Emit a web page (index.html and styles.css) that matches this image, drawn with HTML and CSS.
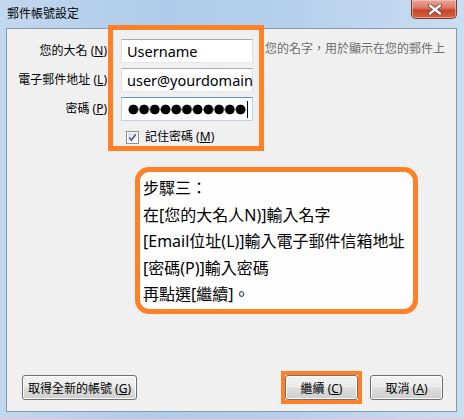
FILE: index.html
```html
<!DOCTYPE html>
<html lang="zh-Hant">
<head>
    <meta charset="UTF-8">
    <title>郵件帳號設定</title>
    <link rel="stylesheet" href="styles.css">
</head>
<body>
    <div class="window">
        <!-- 標題列 -->
        <div class="titlebar">
            <span class="title">郵件帳號設定</span>
            <div class="close">
                <svg width="14" height="11" viewBox="0 0 14 11">
                    <path d="M2 1.5 L12 9.5 M12 1.5 L2 9.5" stroke="#5a3a34" stroke-width="4" stroke-linecap="round"/>
                    <path d="M2 1.5 L12 9.5 M12 1.5 L2 9.5" stroke="#fff" stroke-width="2.4" stroke-linecap="round"/>
                </svg>
            </div>
        </div>

        <div class="panel">
            <!-- 帳號欄位 -->
            <div class="form">
                <div class="labels">
                    <div class="label">您的大名 (<u>N</u>)</div>
                    <div class="label">電子郵件地址 (<u>L</u>)</div>
                    <div class="label">密碼 (<u>P</u>)</div>
                </div>
                <div class="mark fields">
                    <div class="field">Username</div>
                    <div class="field">user@yourdomain</div>
                    <div class="field focused"><span class="dots"></span><span class="caret"></span></div>
                    <div class="remember">
                        <svg class="check" width="13" height="13" viewBox="0 0 13 13">
                            <defs>
                                <linearGradient id="cb" x1="0" y1="0" x2="1" y2="1">
                                    <stop offset="0" stop-color="#dcdcdc"/>
                                    <stop offset="1" stop-color="#fbfbfb"/>
                                </linearGradient>
                            </defs>
                            <rect x="0.5" y="0.5" width="12" height="12" fill="#fff" stroke="#8f8f8f"/>
                            <rect x="2" y="2" width="9" height="9" fill="url(#cb)"/>
                            <path d="M3.3 6.5 L5.4 9.2 L9.8 3.2" fill="none" stroke="#4a5e96" stroke-width="1.6"/>
                        </svg>
                        <span>記住密碼 (<u>M</u>)</span>
                    </div>
                </div>
                <div class="hint">您的名字，用於顯示在您的郵件上</div>
            </div>

            <!-- 說明 -->
            <div class="callout">
                <div>步驟三：</div>
                <div>在[您的大名人N)]輸入名字</div>
                <div>[Email位址(L)]輸入電子郵件信箱地址</div>
                <div>[密碼(P)]輸入密碼</div>
                <div>再點選[繼續]。</div>
            </div>

            <!-- 按鈕 -->
            <div class="actions">
                <button class="btn wide">取得全新的帳號 (<u>G</u>)</button>
                <div class="spacer"></div>
                <div class="mark next">
                    <button class="btn">繼續 (<u>C</u>)</button>
                </div>
                <button class="btn">取消 (<u>A</u>)</button>
            </div>
        </div>
    </div>
</body>
</html>
```

FILE: styles.css
```css
* {
    box-sizing: border-box;
}

body {
    margin: 0;
    font-family: "Noto Sans", "Noto Sans CJK TC", sans-serif;
    font-size: 12px;
    color: #000;
}

/* 視窗外框 */
.window {
    width: 464px;
    height: 419px;
    padding: 0 7px 7px 6px;
    display: flex;
    flex-direction: column;
    background: linear-gradient(90deg, #c2d8ee 0%, #aecbe9 35%, #b7d1ec 65%, #c9ddf2 100%);
}

.titlebar {
    height: 28px;
    flex: none;
    display: flex;
    justify-content: space-between;
    align-items: flex-start;
}

.title {
    padding: 5px 0 0 1px;
    line-height: 16px;
    font-family: "Noto Sans CJK TC", sans-serif;
}

.close {
    width: 46px;
    height: 19px;
    border: 1px solid #7a3b30;
    border-top: none;
    border-radius: 0 0 5px 5px;
    background: linear-gradient(#eaa597 0%, #dc7763 45%, #c9452e 55%, #d6603f 100%);
    box-shadow: inset 0 0 0 1px rgba(255, 220, 210, 0.5);
    display: flex;
    justify-content: center;
    align-items: center;
    padding-left: 2px;
}

/* 內容面板 */
.panel {
    flex: 1;
    border: 1px solid #8898ab;
    background: #f0f0f0;
    display: flex;
    flex-direction: column;
    padding-bottom: 7px;
}

.form {
    display: flex;
    align-items: flex-start;
    margin-top: -4px;
}

.labels {
    width: 101px;
    padding-top: 14px;
    padding-right: 1px;
    display: flex;
    flex-direction: column;
    gap: 5px;
    text-align: right;
}

.label {
    height: 24px;
    line-height: 24px;
    white-space: nowrap;
}

/* 橘色標示框 */
.mark {
    border: 5px solid #ff8026;
}

.fields {
    width: 156px;
    height: 126px;
    padding: 9px 6px 0 8px;
    display: flex;
    flex-direction: column;
    gap: 5px;
}

.field {
    width: 132px;
    height: 24px;
    background: #fff;
    border: 1px solid #dbdfe6;
    border-top-color: #abadb3;
    border-bottom-color: #e3e9ef;
    padding-left: 5px;
    font-size: 14.5px;
    line-height: 22px;
    display: flex;
    align-items: center;
}

.field.focused {
    border-color: #b7d3ea;
    border-top-color: #5c93c2;
}

.dots {
    width: 118px;
    height: 11px;
    margin-left: 1px;
    background: radial-gradient(circle, #000 4.6px, transparent 5.2px) 0 0 / 10.73px 11px repeat-x;
}

.caret {
    width: 1px;
    height: 17px;
    margin-left: 1px;
    background: #000;
}

.remember {
    margin-top: 3px;
    padding-left: 5px;
    height: 16px;
    display: flex;
    align-items: center;
    gap: 6px;
    line-height: 16px;
}

.hint {
    margin-left: 1px;
    padding-top: 15px;
    line-height: 16px;
    color: #6d6d6d;
    white-space: nowrap;
    font-family: "Noto Sans CJK TC", sans-serif;
}

/* 步驟說明 */
.callout {
    margin: 16px 0 0 128px;
    width: 283px;
    height: 147px;
    border: 5px solid #ff8026;
    border-radius: 14px;
    background: #fefefe;
    padding: 3px 0 0 3px;
    font-size: 16px;
    line-height: 26.5px;
    white-space: nowrap;
}

/* 底部按鈕 */
.actions {
    margin-top: auto;
    padding: 0 13px 0 15px;
    display: flex;
    align-items: center;
}

.spacer {
    flex: 1;
}

.btn {
    height: 25px;
    width: 73px;
    padding: 0;
    border: 1px solid #707070;
    border-radius: 3px;
    background: linear-gradient(#f2f2f2 0%, #ebebeb 48%, #dddddd 52%, #cfcfcf 100%);
    box-shadow: inset 0 0 0 1px #fbfbfb;
    font-family: "Noto Sans", "Noto Sans CJK TC", sans-serif;
    font-size: 12px;
    color: #000;
}

.btn.wide {
    width: 115px;
}

.next {
    border-width: 4px;
    margin-right: 8px;
}
```
